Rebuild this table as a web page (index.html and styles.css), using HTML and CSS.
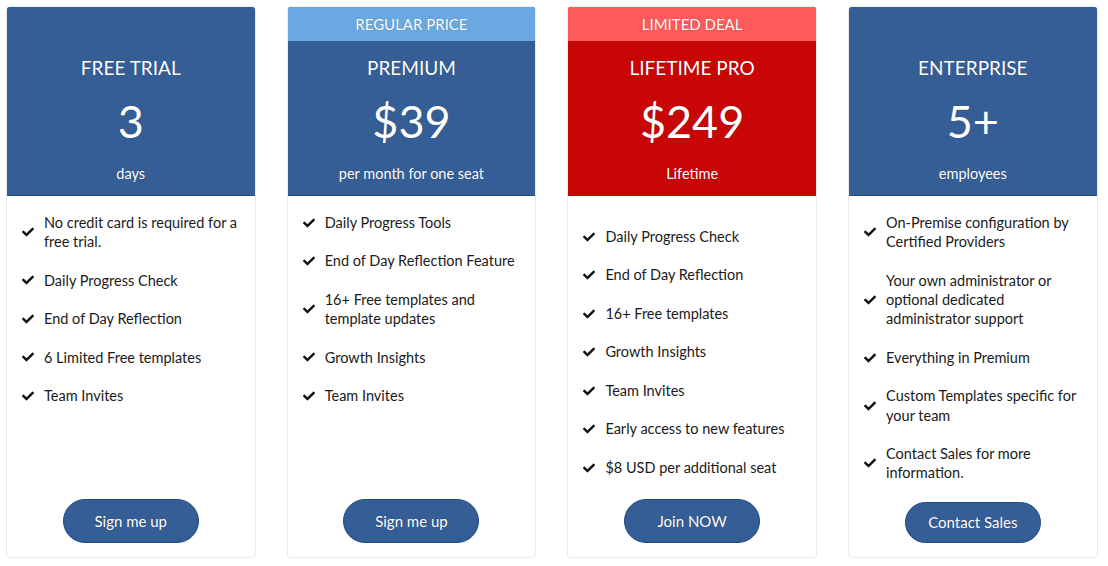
FILE: index.html
```html
<!DOCTYPE html>
<html lang="en">
<head>
    <meta charset="UTF-8">
    <meta name="viewport" content="width=device-width, initial-scale=1.0">
    <title>Pricing</title>
    <link rel="stylesheet" href="styles.css">
</head>
<body>
    <svg style="display:none">
        <symbol id="check" viewBox="0 0 512 512">
            <path d="M173.9 439.4l-166.4-166.4c-10-10-10-26.2 0-36.2l36.2-36.2c10-10 26.2-10 36.2 0L192 312.7 432.1 72.6c10-10 26.2-10 36.2 0l36.2 36.2c10 10 10 26.2 0 36.2l-294.4 294.4c-10 10-26.2 10-36.2 0z"/>
        </symbol>
    </svg>

    <div class="pricing">
        <div class="card">
            <div class="card-header">
                <div class="ribbon"></div>
                <h2 class="plan-name">FREE TRIAL</h2>
                <div class="plan-price">3</div>
                <div class="plan-unit">days</div>
            </div>
            <ul class="features">
                <li><svg class="check"><use href="#check"/></svg><span>No credit card is required for a free trial.</span></li>
                <li><svg class="check"><use href="#check"/></svg><span>Daily Progress Check</span></li>
                <li><svg class="check"><use href="#check"/></svg><span>End of Day Reflection</span></li>
                <li><svg class="check"><use href="#check"/></svg><span>6 Limited Free templates</span></li>
                <li><svg class="check"><use href="#check"/></svg><span>Team Invites</span></li>
            </ul>
            <button class="plan-button">Sign me up</button>
        </div>

        <div class="card">
            <div class="card-header">
                <div class="ribbon ribbon-blue">REGULAR PRICE</div>
                <h2 class="plan-name">PREMIUM</h2>
                <div class="plan-price">$39</div>
                <div class="plan-unit">per month for one seat</div>
            </div>
            <ul class="features">
                <li><svg class="check"><use href="#check"/></svg><span>Daily Progress Tools</span></li>
                <li><svg class="check"><use href="#check"/></svg><span>End of Day Reflection Feature</span></li>
                <li><svg class="check"><use href="#check"/></svg><span>16+ Free templates and template updates</span></li>
                <li><svg class="check"><use href="#check"/></svg><span>Growth Insights</span></li>
                <li><svg class="check"><use href="#check"/></svg><span>Team Invites</span></li>
            </ul>
            <button class="plan-button">Sign me up</button>
        </div>

        <div class="card">
            <div class="card-header header-red">
                <div class="ribbon ribbon-red">LIMITED DEAL</div>
                <h2 class="plan-name">LIFETIME PRO</h2>
                <div class="plan-price">$249</div>
                <div class="plan-unit">Lifetime</div>
            </div>
            <ul class="features features-spaced">
                <li><svg class="check"><use href="#check"/></svg><span>Daily Progress Check</span></li>
                <li><svg class="check"><use href="#check"/></svg><span>End of Day Reflection</span></li>
                <li><svg class="check"><use href="#check"/></svg><span>16+ Free templates</span></li>
                <li><svg class="check"><use href="#check"/></svg><span>Growth Insights</span></li>
                <li><svg class="check"><use href="#check"/></svg><span>Team Invites</span></li>
                <li><svg class="check"><use href="#check"/></svg><span>Early access to new features</span></li>
                <li><svg class="check"><use href="#check"/></svg><span>$8 USD per additional seat</span></li>
            </ul>
            <button class="plan-button">Join NOW</button>
        </div>

        <div class="card">
            <div class="card-header">
                <div class="ribbon"></div>
                <h2 class="plan-name">ENTERPRISE</h2>
                <div class="plan-price">5+</div>
                <div class="plan-unit">employees</div>
            </div>
            <ul class="features">
                <li><svg class="check"><use href="#check"/></svg><span>On-Premise configuration by Certified Providers</span></li>
                <li><svg class="check"><use href="#check"/></svg><span>Your own administrator or optional dedicated administrator support</span></li>
                <li><svg class="check"><use href="#check"/></svg><span>Everything in Premium</span></li>
                <li><svg class="check"><use href="#check"/></svg><span>Custom Templates specific for your team</span></li>
                <li><svg class="check"><use href="#check"/></svg><span>Contact Sales for more information.</span></li>
            </ul>
            <button class="plan-button">Contact Sales</button>
        </div>
    </div>
</body>
</html>
```

FILE: styles.css
```css
* {
    margin: 0;
    padding: 0;
    box-sizing: border-box;
}

body {
    font-family: Lato, 'Open Sans', sans-serif;
    background: #fff;
    color: #1a1a1a;
}

.pricing {
    display: grid;
    grid-template-columns: repeat(4, 249.5px);
    gap: 31.2px;
    padding: 6px;
}

.card {
    height: 552px;
    display: flex;
    flex-direction: column;
    border: 1px solid #ececec;
    border-radius: 4px;
    overflow: hidden;
    background: #fff;
}

.card-header {
    background: #365e96;
    border: 1px solid #1f4a82;
    border-radius: 4px 4px 0 0;
    margin: -1px -1px 0;
    color: #fff;
    text-align: center;
    padding-bottom: 12px;
    text-shadow: 0 0 1px rgba(0, 0, 0, 0.35);
}

.header-red {
    background: #c80606;
    border-color: #c80606;
}

.ribbon {
    height: 34px;
    line-height: 34px;
    font-size: 15px;
}

.ribbon-blue {
    background: #6aa8e1;
}

.ribbon-red {
    background: #ff5a5c;
}

.plan-name {
    font-size: 19px;
    font-weight: 400;
    line-height: 23px;
    margin-top: 15px;
}

.plan-price {
    font-size: 45px;
    line-height: 52px;
    margin-top: 16px;
}

.plan-unit {
    font-size: 14.5px;
    line-height: 19px;
    margin-top: 17px;
}

.features {
    list-style: none;
    padding: 17px 8px 0 15px;
}

.features-spaced {
    padding-top: 31px;
}

.features li {
    display: flex;
    align-items: center;
    gap: 10px;
    font-size: 14.5px;
    line-height: 19.3px;
    margin-bottom: 19.2px;
}

.check {
    width: 12px;
    height: 12px;
    flex-shrink: 0;
    fill: #111;
}

.plan-button {
    margin: auto auto 14px;
    width: 136px;
    height: 44px;
    border-radius: 22px;
    background: #365e96;
    border: 1px solid #1f4a82;
    color: #fff;
    font-family: Lato, sans-serif;
    font-size: 15px;
    text-shadow: 0 0 1px rgba(0, 0, 0, 0.4);
    cursor: pointer;
}
```
